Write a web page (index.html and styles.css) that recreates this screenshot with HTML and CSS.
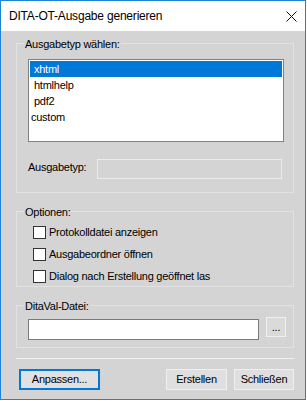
FILE: index.html
```html
<!DOCTYPE html>
<html lang="de">
<head>
  <meta charset="UTF-8">
  <meta name="viewport" content="width=device-width, initial-scale=1.0">
  <title>DITA-OT-Ausgabe generieren</title>
  <link rel="stylesheet" href="styles.css">
</head>
<body>
  <div class="window">
    <div class="titlebar">
      <span class="title">DITA-OT-Ausgabe generieren</span>
      <svg class="close" width="11" height="11" viewBox="0 0 11 11">
        <path d="M0.5 0.5L10.5 10.5M10.5 0.5L0.5 10.5" stroke="#111" stroke-width="1" fill="none"/>
      </svg>
    </div>

    <div class="content">
      <fieldset class="group group-type">
        <legend>Ausgabetyp wählen:</legend>
        <ul class="listbox">
          <li class="selected">xhtml</li>
          <li>htmlhelp</li>
          <li>pdf2</li>
          <li class="plain">custom</li>
        </ul>
        <div class="field-row">
          <span class="field-label">Ausgabetyp:</span>
          <div class="textfield disabled"></div>
        </div>
      </fieldset>

      <fieldset class="group group-options">
        <legend>Optionen:</legend>
        <div class="options">
          <div class="option"><span class="check"></span>Protokolldatei anzeigen</div>
          <div class="option"><span class="check"></span>Ausgabeordner öffnen</div>
          <div class="option"><span class="check"></span>Dialog nach Erstellung geöffnet las</div>
        </div>
      </fieldset>

      <fieldset class="group group-file">
        <legend>DitaVal-Datei:</legend>
        <div class="file-row">
          <div class="textfield file"></div>
          <button class="browse">...</button>
        </div>
      </fieldset>

      <div class="separator"></div>

      <div class="actions">
        <button class="btn primary">Anpassen...</button>
        <button class="btn create">Erstellen</button>
        <button class="btn close-btn">Schließen</button>
      </div>
    </div>
  </div>
</body>
</html>
```

FILE: styles.css
```css
body {
  margin: 0;
  background-color: #fff;
  font-family: "Liberation Sans", Arial, sans-serif;
  font-size: 11px;
  letter-spacing: -0.25px;
  color: #000;
}
.window {
  width: 306px;
  height: 400px;
  box-sizing: border-box;
  border: 1px solid #1c84d8;
  display: flex;
  flex-direction: column;
}
.titlebar {
  height: 30px;
  flex: none;
  display: flex;
  align-items: center;
  justify-content: space-between;
  padding: 0 8px;
  background-color: #fff;
}
.title {
  font-size: 12px;
  letter-spacing: -0.2px;
}
.content {
  flex: 1;
  padding: 5px 11px 0 15px;
  background-color: #d4d4d4;
}
.group {
  margin: 0;
  min-width: 0;
  border: 1px solid #e2e2e2;
}
.group legend {
  padding: 2px 1px 0;
  line-height: 13px;
}
.group-type {
  padding: 8px 9px 13px 11px;
}
.group-type legend {
  margin-left: -4px;
}
.group-options {
  margin-top: 11px;
  padding: 7px 9px 3px 16px;
}
.group-options legend {
  margin-left: -9px;
}
.group-file {
  margin-top: 11px;
  padding: 4px 7px 7px 11px;
}
.group-file legend {
  margin-left: -4px;
}
.listbox {
  list-style: none;
  margin: 0;
  padding: 1px;
  height: 83px;
  box-sizing: border-box;
  border: 1px solid #828282;
  background-color: #fff;
}
.listbox li {
  height: 16px;
  line-height: 16px;
  padding-left: 4px;
}
.listbox li.selected {
  background-color: #0078d7;
  color: #fff;
}
.listbox li.plain {
  padding-left: 1px;
}
.field-row {
  display: flex;
  align-items: flex-start;
  margin-top: 17px;
}
.field-label {
  width: 69px;
  flex: none;
  padding-top: 2px;
  line-height: 13px;
}
.textfield {
  box-sizing: border-box;
}
.textfield.disabled {
  width: 185px;
  height: 20px;
  border: 1px solid #ececec;
}
.options {
  display: flex;
  flex-direction: column;
  gap: 9px;
}
.option {
  display: flex;
  align-items: center;
  gap: 3px;
  height: 13px;
  line-height: 13px;
}
.check {
  width: 13px;
  height: 13px;
  box-sizing: border-box;
  border: 1px solid #333;
  background-color: #fff;
}
.file-row {
  display: flex;
  align-items: flex-start;
  gap: 7px;
}
.textfield.file {
  width: 231px;
  height: 21px;
  margin-top: 2px;
  border: 1px solid #7a7a7a;
  background-color: #fff;
}
button {
  font-family: inherit;
  font-size: 11px;
  letter-spacing: -0.25px;
  color: #000;
  padding: 0;
  box-sizing: border-box;
  line-height: 13px;
}
.browse {
  width: 20px;
  height: 20px;
  border: 1px solid #efefef;
  background-color: #dadada;
}
.separator {
  margin-top: 10px;
  height: 1px;
  background-color: #f0f0f0;
}
.actions {
  display: flex;
  margin-top: 10px;
  padding-left: 3px;
}
.btn {
  height: 21px;
  border: 1px solid #f0f0f0;
  background-color: #dfdfdf;
}
.btn.primary {
  width: 81px;
  border: 2px solid #0078d7;
  background-color: #e1e1e1;
}
.btn.create {
  width: 61px;
  margin-left: auto;
}
.btn.close-btn {
  width: 60px;
  margin-left: 7px;
}
```
